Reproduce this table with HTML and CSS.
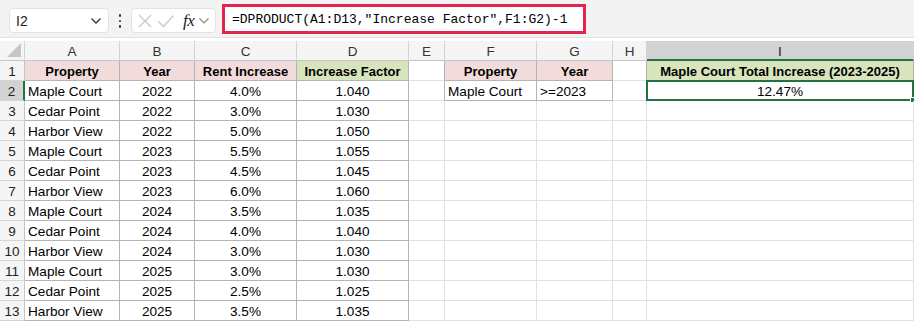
FILE: index.html
```html
<!DOCTYPE html>
<html>
<head>
<meta charset="utf-8">
<link rel="stylesheet" href="styles.css">
</head>
<body>
<div class="toolbar">
  <div class="namebox"><span class="ref">I2</span>
    <svg class="chev" width="12" height="8" viewBox="0 0 12 8"><path d="M1.5 1.5 L6 6 L10.5 1.5" fill="none" stroke="#333" stroke-width="1.3"/></svg>
  </div>
  <div class="dots"><span></span><span></span><span></span></div>
  <div class="fxbox">
    <svg width="16" height="16" viewBox="0 0 16 16"><path d="M2 2 L14 14 M14 2 L2 14" stroke="#c8c8c8" stroke-width="1.3" fill="none"/></svg>
    <svg width="18" height="16" viewBox="0 0 18 16"><path d="M1.5 8.5 L6.5 13.5 L16.5 2.5" stroke="#c8c8c8" stroke-width="1.3" fill="none"/></svg>
    <span class="fx">fx</span>
    <svg class="chev" width="12" height="8" viewBox="0 0 12 8"><path d="M1.5 1.5 L6 6 L10.5 1.5" fill="none" stroke="#888" stroke-width="1.2"/></svg>
  </div>
  <div class="formula">=DPRODUCT(A1:D13,"Increase Factor",F1:G2)-1</div>
</div>
<div class="sheet">
  <div class="ch corner"><svg width="14" height="14" viewBox="0 0 14 14"><path d="M14 0 L14 14 L0 14 Z" fill="#c6c6c6"/></svg></div>
  <div class="ch">A</div><div class="ch">B</div><div class="ch">C</div><div class="ch">D</div><div class="ch">E</div><div class="ch">F</div><div class="ch">G</div><div class="ch">H</div><div class="ch sel-col">I</div>

  <div class="rh">1</div>
  <div class="c b hp ctr">Property</div><div class="c b hp ctr">Year</div><div class="c b hp ctr">Rent Increase</div><div class="c b hg ctr">Increase Factor</div>
  <div class="c bl"></div><div class="c b hp ctr">Property</div><div class="c b hp ctr">Year</div><div class="c bl"></div><div class="c b hg ctr">Maple Court Total Increase (2023-2025)</div>

  <div class="rh sel-row">2</div>
  <div class="c b">Maple Court</div><div class="c b ctr">2022</div><div class="c b ctr">4.0%</div><div class="c b ctr">1.040</div>
  <div class="c bl"></div><div class="c b">Maple Court</div><div class="c b">&gt;=2023</div><div class="c bl"></div><div class="c active ctr">12.47%<span class="handle"></span></div>

  <div class="rh">3</div>
  <div class="c b">Cedar Point</div><div class="c b ctr">2022</div><div class="c b ctr">3.0%</div><div class="c b ctr">1.030</div>
  <div class="c"></div><div class="c"></div><div class="c"></div><div class="c"></div><div class="c"></div>

  <div class="rh">4</div>
  <div class="c b">Harbor View</div><div class="c b ctr">2022</div><div class="c b ctr">5.0%</div><div class="c b ctr">1.050</div>
  <div class="c"></div><div class="c"></div><div class="c"></div><div class="c"></div><div class="c"></div>

  <div class="rh">5</div>
  <div class="c b">Maple Court</div><div class="c b ctr">2023</div><div class="c b ctr">5.5%</div><div class="c b ctr">1.055</div>
  <div class="c"></div><div class="c"></div><div class="c"></div><div class="c"></div><div class="c"></div>

  <div class="rh">6</div>
  <div class="c b">Cedar Point</div><div class="c b ctr">2023</div><div class="c b ctr">4.5%</div><div class="c b ctr">1.045</div>
  <div class="c"></div><div class="c"></div><div class="c"></div><div class="c"></div><div class="c"></div>

  <div class="rh">7</div>
  <div class="c b">Harbor View</div><div class="c b ctr">2023</div><div class="c b ctr">6.0%</div><div class="c b ctr">1.060</div>
  <div class="c"></div><div class="c"></div><div class="c"></div><div class="c"></div><div class="c"></div>

  <div class="rh">8</div>
  <div class="c b">Maple Court</div><div class="c b ctr">2024</div><div class="c b ctr">3.5%</div><div class="c b ctr">1.035</div>
  <div class="c"></div><div class="c"></div><div class="c"></div><div class="c"></div><div class="c"></div>

  <div class="rh">9</div>
  <div class="c b">Cedar Point</div><div class="c b ctr">2024</div><div class="c b ctr">4.0%</div><div class="c b ctr">1.040</div>
  <div class="c"></div><div class="c"></div><div class="c"></div><div class="c"></div><div class="c"></div>

  <div class="rh">10</div>
  <div class="c b">Harbor View</div><div class="c b ctr">2024</div><div class="c b ctr">3.0%</div><div class="c b ctr">1.030</div>
  <div class="c"></div><div class="c"></div><div class="c"></div><div class="c"></div><div class="c"></div>

  <div class="rh">11</div>
  <div class="c b">Maple Court</div><div class="c b ctr">2025</div><div class="c b ctr">3.0%</div><div class="c b ctr">1.030</div>
  <div class="c"></div><div class="c"></div><div class="c"></div><div class="c"></div><div class="c"></div>

  <div class="rh">12</div>
  <div class="c b">Cedar Point</div><div class="c b ctr">2025</div><div class="c b ctr">2.5%</div><div class="c b ctr">1.025</div>
  <div class="c"></div><div class="c"></div><div class="c"></div><div class="c"></div><div class="c"></div>

  <div class="rh">13</div>
  <div class="c b">Harbor View</div><div class="c b ctr">2025</div><div class="c b ctr">3.5%</div><div class="c b ctr">1.035</div>
  <div class="c"></div><div class="c"></div><div class="c"></div><div class="c"></div><div class="c"></div>
</div>
</body>
</html>
```

FILE: styles.css
```css
* { box-sizing: border-box; }
html, body { margin: 0; padding: 0; background: #fff; }
body {
  width: 914px;
  height: 322px;
  overflow: hidden;
  font-family: "Liberation Sans", Arial, sans-serif;
  color: #000;
}
.toolbar {
  height: 38px;
  background: #f3f3f3;
  border-bottom: 1px solid #e2e2e2;
  display: flex;
  align-items: flex-start;
  padding-left: 9px;
}
.namebox {
  margin-top: 8px;
  width: 100px;
  height: 25px;
  background: #fff;
  border: 1px solid #e3e3e3;
  border-radius: 4px;
  display: flex;
  align-items: center;
  justify-content: space-between;
  padding: 0 6px 0 6px;
  font-size: 14px;
  color: #222;
}
.dots {
  margin-top: 14px;
  width: 22px;
  display: flex;
  flex-direction: column;
  align-items: center;
  gap: 3px;
}
.dots span {
  width: 2.5px;
  height: 2.5px;
  background: #333;
  border-radius: 50%;
}
.fxbox {
  margin-top: 8px;
  width: 85px;
  height: 25px;
  background: #fff;
  border: 1px solid #e3e3e3;
  border-radius: 4px;
  display: flex;
  align-items: center;
  gap: 4px;
  padding-left: 5px;
}
.fx {
  font-family: "Liberation Serif", "Times New Roman", serif;
  font-style: italic;
  font-size: 17px;
  color: #222;
  margin-left: 4px;
  letter-spacing: -0.5px;
}
.formula {
  margin-top: 4px;
  margin-left: 6px;
  width: 364px;
  height: 30px;
  background: #fff;
  border: 3px solid #e0254f;
  display: flex;
  align-items: center;
  padding-left: 7px;
  font-family: "Liberation Mono", "Courier New", monospace;
  font-size: 13px;
  color: #000;
}
.sheet {
  margin-top: 3px;
  display: grid;
  grid-template-columns: 25px 95px 75px 102px 112px 36px 92px 76px 34px 267px;
  grid-template-rows: 20px repeat(13, 20px);
  font-size: 13.6px;
}
.ch {
  background: #f5f5f5;
  border-right: 1px solid #d4d4d4;
  border-bottom: 1px solid #c6c6c6;
  display: flex;
  align-items: center;
  justify-content: center;
  padding-top: 2px;
  font-size: 13.5px;
  color: #333;
}
.corner { justify-content: flex-end; align-items: flex-end; padding: 0 3px 3px 0; }
.sel-col {
  background: #d3d3d3;
  border-bottom: 2px solid #217346;
  color: #222;
}
.rh {
  background: #f5f5f5;
  border-right: 1px solid #c6c6c6;
  border-bottom: 1px solid #d4d4d4;
  display: flex;
  align-items: center;
  justify-content: center;
  padding-top: 2px;
  font-size: 13.5px;
  color: #222;
}
.sel-row {
  background: #d3d3d3;
  border-right: 2px solid #217346;
}
.c {
  border-right: 1px solid #e1e1e1;
  border-bottom: 1px solid #e1e1e1;
  padding-left: 3px;
  padding-top: 2px;
  line-height: 17px;
  white-space: nowrap;
  overflow: hidden;
  position: relative;
}
.c.b { border-right-color: #b4b4b4; border-bottom-color: #b4b4b4; }
.c.bl { border-right-color: #b4b4b4; }
.ctr { text-align: center; padding-left: 0; }
.hp { background: #f2dcdb; font-weight: bold; font-size: 13px; }
.hg { background: #d8e4bc; font-weight: bold; font-size: 13px; }
.active {
  border: 2px solid #217346;
  margin-left: -1px;
  margin-top: -1px;
  padding-top: 1px;
  overflow: visible;
}
.handle {
  position: absolute;
  right: -4px;
  bottom: -4px;
  width: 6px;
  height: 6px;
  background: #217346;
  border: 1px solid #fff;
}
```
